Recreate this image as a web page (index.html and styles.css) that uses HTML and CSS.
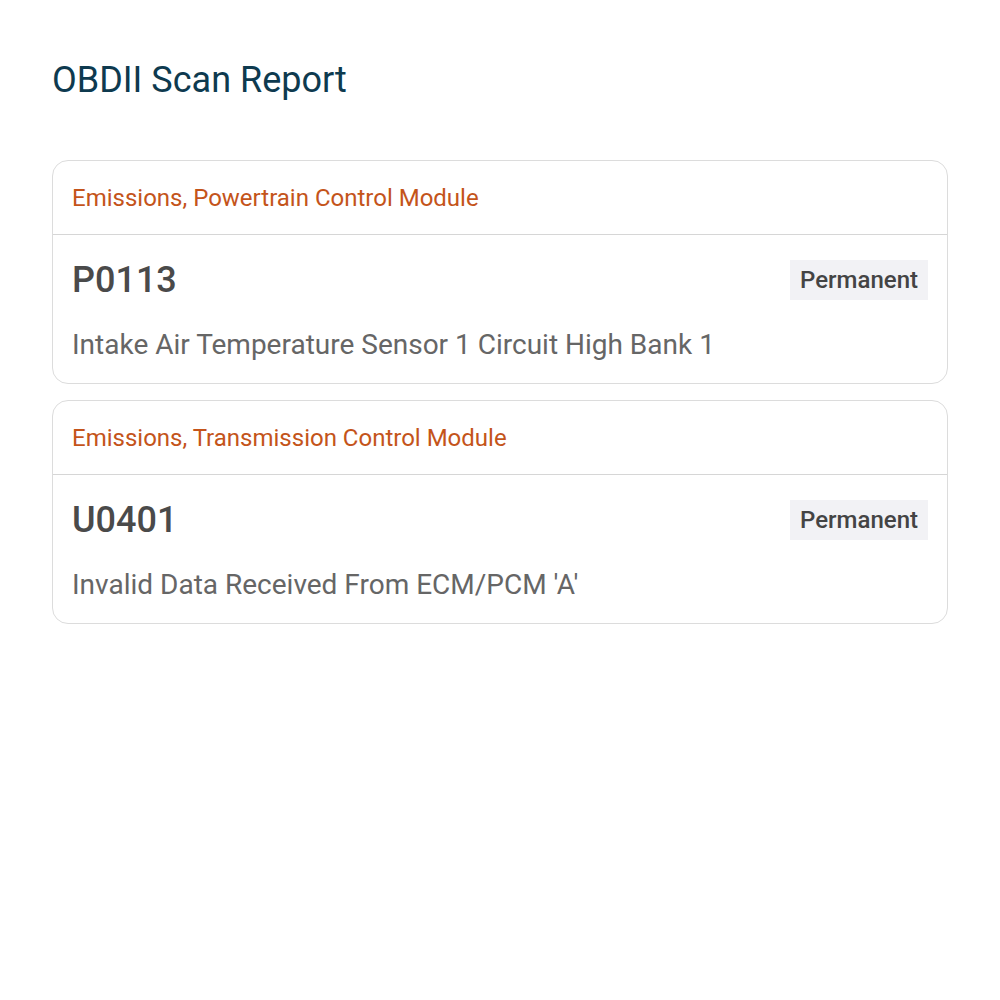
FILE: index.html
```html
<!DOCTYPE html>
<html>
<head>
<meta charset="utf-8">
<link rel="stylesheet" href="styles.css">
</head>
<body>
<div class="page">
  <h1 class="title">OBDII Scan Report</h1>
  <div class="list">
    <div class="card">
      <div class="card-head">Emissions, Powertrain Control Module</div>
      <div class="card-body">
        <div class="row">
          <div class="code">P0113</div>
          <div class="badge">Permanent</div>
        </div>
        <div class="desc">Intake Air Temperature Sensor 1 Circuit High Bank 1</div>
      </div>
    </div>
    <div class="card">
      <div class="card-head">Emissions, Transmission Control Module</div>
      <div class="card-body">
        <div class="row">
          <div class="code">U0401</div>
          <div class="badge">Permanent</div>
        </div>
        <div class="desc">Invalid Data Received From ECM/PCM 'A'</div>
      </div>
    </div>
  </div>
</div>
</body>
</html>
```
FILE: styles.css
```css
* { box-sizing: border-box; }
body {
  margin: 0;
  background: #fff;
  font-family: Roboto, "Noto Sans", sans-serif;
}
.page {
  padding: 56px 52px;
}
.title {
  margin: 0 0 56px 0;
  font-size: 36px;
  font-weight: 400;
  color: #0e3a4f;
  line-height: 48px;
}
.list {
  display: flex;
  flex-direction: column;
  gap: 16px;
}
.card {
  border: 1px solid #dcdcdc;
  border-radius: 16px;
  overflow: hidden;
}
.card-head {
  padding: 0 19px;
  height: 74px;
  display: flex;
  align-items: center;
  border-bottom: 1px solid #d6d6d6;
  color: #c4541a;
  font-size: 24px;
}
.card-body {
  padding: 24px 19px 21px 19px;
}
.row {
  display: flex;
  justify-content: space-between;
  align-items: center;
}
.code {
  font-size: 36px;
  font-weight: 500;
  color: #4a4a4a;
  line-height: 42px;
}
.badge {
  background: #f2f2f5;
  color: #444;
  font-size: 24px;
  font-weight: 500;
  padding: 0 10px;
  height: 40px;
  display: flex;
  align-items: center;
}
.desc {
  margin-top: 27px;
  font-size: 28px;
  color: #666;
  line-height: 34px;
}
```
